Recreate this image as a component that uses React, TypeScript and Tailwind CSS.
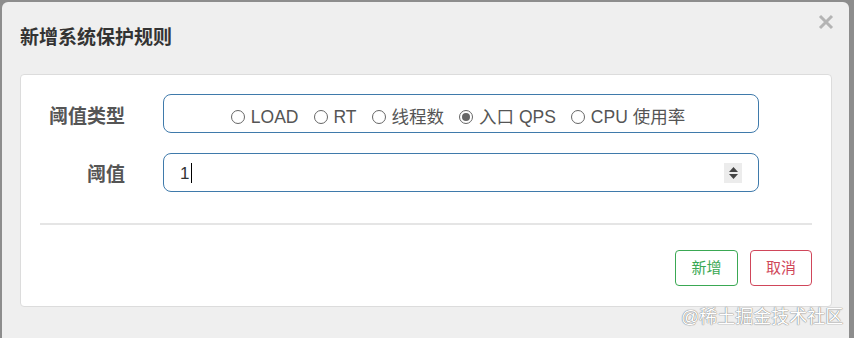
import { useState } from "react";

const options = [
  { label: "LOAD", value: "load" },
  { label: "RT", value: "rt" },
  { label: "线程数", value: "thread" },
  { label: "入口 QPS", value: "qps" },
  { label: "CPU 使用率", value: "cpu" },
];

export default function App() {
  const [selected, setSelected] = useState("qps");

  return (
    <div
      className="w-[854px] h-[338px] overflow-hidden bg-[#8d8d8d] pl-[2px] pt-[2px]"
      style={{ fontFamily: '"Liberation Sans", "Noto Sans CJK SC", sans-serif' }}
    >
      <div className="relative w-[847px] h-[346px] rounded-[6px] bg-[#efefef] px-[18px]">
        {/* header */}
        <div className="flex items-center justify-between h-[72px] pb-[2px]">
          <h4 className="text-[19px] font-bold text-[#333] pt-[2px]">新增系统保护规则</h4>
          <button className="mr-[-3px] mb-[30px] text-[#b4b4b4]">
            <svg width="16" height="16" viewBox="0 0 16 16">
              <path d="M2 2 L14 14 M14 2 L2 14" stroke="currentColor" strokeWidth="3" />
            </svg>
          </button>
        </div>

        {/* body panel */}
        <div className="w-[812px] h-[233px] rounded-[4px] border border-[#dcdcdc] bg-white px-[19px] pt-[19px]">
          <div className="flex items-center h-[39px]">
            <label className="w-[85px] text-right text-[19px] font-bold text-[#555] pt-[8px]">阈值类型</label>
            <div className="ml-[38px] w-[596px] h-[39px] rounded-[8px] border border-[#3f7aab] flex items-center justify-center gap-[15px] pr-[6px] pt-[7px] text-[17.5px] text-[#555]">
              {options.map((o) => {
                const on = selected === o.value;
                return (
                  <label
                    key={o.value}
                    className="flex items-center gap-[6px] cursor-pointer"
                    onClick={() => setSelected(o.value)}
                  >
                    <span className="w-[14px] h-[14px] rounded-full border border-[#666] flex items-center justify-center">
                      {on && <span className="w-[8px] h-[8px] rounded-full bg-[#666]" />}
                    </span>
                    <span>{o.label}</span>
                  </label>
                );
              })}
            </div>
          </div>

          <div className="flex items-center h-[39px] mt-[20px]">
            <label className="w-[85px] text-right text-[19px] font-bold text-[#555] pt-[6px]">阈值</label>
            <div className="ml-[38px] w-[596px] h-[39px] rounded-[8px] border border-[#3f7aab] flex items-center pl-[16px] pr-[16px]">
              <span className="text-[17px] text-[#333] pt-[2px]">1</span>
              <span className="ml-[2px] w-px h-[20px] bg-black" />
              <div className="ml-auto w-[18px] h-[20px] bg-[#ececec] flex flex-col items-center justify-center gap-[2px]">
                <svg width="9" height="5" viewBox="0 0 9 5">
                  <path d="M0 5 L4.5 0 L9 5 Z" fill="#444" />
                </svg>
                <svg width="9" height="5" viewBox="0 0 9 5">
                  <path d="M0 0 L4.5 5 L9 0 Z" fill="#444" />
                </svg>
              </div>
            </div>
          </div>

          <div className="mt-[31px] h-[2px] bg-[#e5e5e5]" />

          <div className="flex justify-end gap-[12px] mt-[25px]">
            <button className="w-[63px] h-[36px] rounded-[4px] border border-[#3aa853] text-[15px] text-[#3aa853]">
              新增
            </button>
            <button className="w-[62px] h-[36px] rounded-[4px] border border-[#d0465a] text-[15px] text-[#d0465a]">
              取消
            </button>
          </div>
        </div>

        <div className="absolute left-[679px] top-[302px] text-[18px] text-white [text-shadow:0_0_1px_#777,0_0_1px_#777]">
          @稀土掘金技术社区
        </div>
      </div>
    </div>
  );
}
